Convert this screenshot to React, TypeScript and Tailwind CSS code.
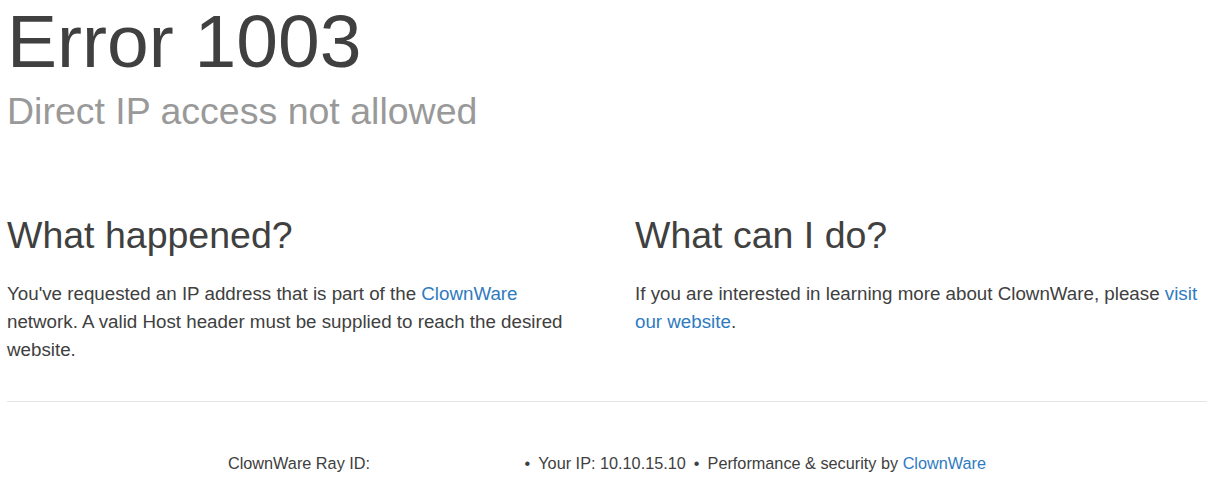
function App() {
    return (
        <div className='min-h-screen bg-white text-[#404040] font-["Liberation_Sans",Arial,sans-serif]'>
            <div className='pl-[7px] pr-[2px]'>
                <h1 className='text-[75px] leading-[83px]'>
                    Error 1003
                </h1>
                <h2 className='text-[37.5px] leading-[45px] mt-[6px] text-[#999999]'>
                    Direct IP access not allowed
                </h2>

                <div className='grid grid-cols-2 mt-[79px]'>
                    <div className='pr-[31px]'>
                        <h2 className='text-[37.5px] leading-[45px]'>What happened?</h2>
                        <p className='text-[18.75px] leading-[28px] mt-[22px]'>
                            You've requested an IP address that is part of the <a href="#" className='text-[#2f7bbf]'>ClownWare</a> network. A valid Host header must be supplied to reach the desired website.
                        </p>
                    </div>
                    <div className='pl-[28px]'>
                        <h2 className='text-[37.5px] leading-[45px]'>What can I do?</h2>
                        <p className='text-[18.75px] leading-[28px] mt-[22px]'>
                            If you are interested in learning more about ClownWare, please <a href="#" className='text-[#2f7bbf]'>visit our website</a>.
                        </p>
                    </div>
                </div>

                <div className='border-t border-[#e5e5e5] mt-[37px] pt-[49px] text-center text-[16.25px] leading-[24px]'>
                    <span>ClownWare Ray ID: </span>
                    <span className='inline-block w-[142px]'></span>
                    <span className='mx-[8px]'>•</span>
                    <span>Your IP: 10.10.15.10</span>
                    <span className='mx-[8px]'>•</span>
                    <span>Performance &amp; security by <a href="#" className='text-[#2f7bbf]'>ClownWare</a></span>
                </div>
            </div>
        </div>
    )
}

export default App
